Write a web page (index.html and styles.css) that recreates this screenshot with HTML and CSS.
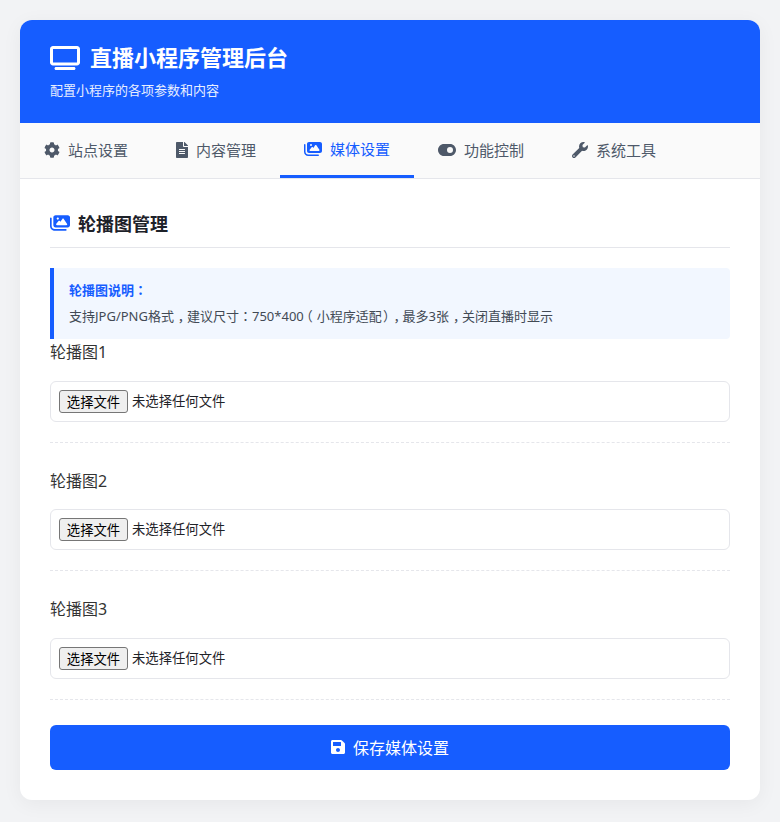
FILE: index.html
```html
<!DOCTYPE html>
<html lang="zh-CN">
<head>
<meta charset="utf-8">
<title>直播小程序管理后台</title>
<link rel="stylesheet" href="styles.css">
</head>
<body>
<main class="card">
  <header class="hero">
    <h1 class="hero-title">
      <svg class="hero-icon" viewBox="0 0 640 512"><path d="M64 64V352H576V64H64zM0 64C0 28.7 28.7 0 64 0H576c35.3 0 64 28.7 64 64V352c0 35.3-28.7 64-64 64H64c-35.3 0-64-28.7-64-64V64zM128 448H512c17.7 0 32 14.3 32 32s-14.3 32-32 32H128c-17.7 0-32-14.3-32-32s14.3-32 32-32z"/></svg>
      直播小程序管理后台
    </h1>
    <p class="hero-sub">配置小程序的各项参数和内容</p>
  </header>
  <nav class="tabs">
    <a class="tab">
      <svg class="tab-icon icon-w16" viewBox="0 0 512 512"><path d="M487.4 315.7l-42.6-24.6c4.3-23.2 4.3-47 0-70.2l42.6-24.6c4.9-2.8 7.1-8.6 5.5-14-11.1-35.6-30-67.8-54.7-94.6-3.8-4.1-10-5.1-14.8-2.3L380.8 110c-17.9-15.4-38.5-27.3-60.8-35.1V25.8c0-5.6-3.9-10.5-9.4-11.7-36.7-8.2-74.3-7.8-109.2 0-5.5 1.2-9.4 6.1-9.4 11.7V75c-22.2 7.9-42.8 19.8-60.8 35.1L88.7 85.5c-4.9-2.8-11-1.9-14.8 2.3-24.7 26.7-43.6 58.9-54.7 94.6-1.7 5.4.6 11.2 5.5 14L67.3 221c-4.3 23.2-4.3 47 0 70.2l-42.6 24.6c-4.9 2.8-7.1 8.6-5.5 14 11.1 35.6 30 67.8 54.7 94.6 3.8 4.1 10 5.1 14.8 2.3l42.6-24.6c17.9 15.4 38.5 27.3 60.8 35.1v49.2c0 5.6 3.9 10.5 9.4 11.7 36.7 8.2 74.3 7.8 109.2 0 5.5-1.2 9.4-6.1 9.4-11.7v-49.2c22.2-7.9 42.8-19.8 60.8-35.1l42.6 24.6c4.9 2.8 11 1.9 14.8-2.3 24.7-26.7 43.6-58.9 54.7-94.6 1.5-5.5-.7-11.3-5.6-14.1zM256 336c-44.1 0-80-35.9-80-80s35.9-80 80-80 80 35.9 80 80-35.9 80-80 80z"/></svg>
      站点设置
    </a>
    <a class="tab">
      <svg class="tab-icon icon-w12" viewBox="0 0 384 512"><path d="M224 136V0H24C10.7 0 0 10.7 0 24v464c0 13.3 10.7 24 24 24h336c13.3 0 24-10.7 24-24V160H248c-13.2 0-24-10.8-24-24zm64 236c0 6.6-5.4 12-12 12H108c-6.6 0-12-5.4-12-12v-8c0-6.6 5.4-12 12-12h168c6.6 0 12 5.4 12 12v8zm0-64c0 6.6-5.4 12-12 12H108c-6.6 0-12-5.4-12-12v-8c0-6.6 5.4-12 12-12h168c6.6 0 12 5.4 12 12v8zm0-72v8c0 6.6-5.4 12-12 12H108c-6.6 0-12-5.4-12-12v-8c0-6.6 5.4-12 12-12h168c6.6 0 12 5.4 12 12zm96-114.1v6.1H256V0h6.1c6.4 0 12.5 2.5 17 7l97.9 98c4.5 4.5 7 10.6 7 16.9z"/></svg>
      内容管理
    </a>
    <a class="tab tab-active">
      <svg class="tab-icon icon-w18" viewBox="0 0 576 512"><path d="M160 32c-35.3 0-64 28.7-64 64V320c0 35.3 28.7 64 64 64H512c35.3 0 64-28.7 64-64V96c0-35.3-28.7-64-64-64H160zM396 138.7l96 144c4.9 7.4 5.4 16.8 1.2 24.6S480.9 320 472 320H328 280 200c-9.2 0-17.6-5.3-21.6-13.6s-2.9-18.2 2.9-25.4l64-80c4.6-5.7 11.4-9 18.7-9s14.2 3.3 18.7 9l17.3 21.6 56-84C360.5 132 368 128 376 128s15.5 4 20 10.7zM192 128a32 32 0 1 1 64 0 32 32 0 1 1 -64 0zM48 120c0-13.3-10.7-24-24-24S0 106.7 0 120V344c0 75.1 60.9 136 136 136H456c13.3 0 24-10.7 24-24s-10.7-24-24-24H136c-48.6 0-88-39.4-88-88V120z"/></svg>
      媒体设置
    </a>
    <a class="tab">
      <svg class="tab-icon icon-w18" viewBox="0 0 576 512"><path d="M192 64C86 64 0 150 0 256S86 448 192 448H384c106 0 192-86 192-192s-86-192-192-192H192zm192 96a96 96 0 1 1 0 192 96 96 0 1 1 0-192z"/></svg>
      功能控制
    </a>
    <a class="tab">
      <svg class="tab-icon icon-w16" viewBox="0 0 512 512"><path d="M507.73 109.1c-2.24-9.03-13.54-12.09-20.12-5.51l-74.36 74.36-67.88-11.31-11.31-67.88 74.36-74.36c6.62-6.62 3.43-17.9-5.66-20.16-47.38-11.74-99.55.91-136.58 37.93-39.64 39.64-50.55 97.1-34.05 147.2L18.74 402.76c-24.99 24.99-24.99 65.51 0 90.5 24.99 24.99 65.51 24.99 90.5 0l213.21-213.21c50.12 16.71 107.47 5.68 147.37-34.22 37.07-37.07 49.7-89.32 37.91-136.73zM64 472c-13.25 0-24-10.75-24-24 0-13.26 10.75-24 24-24s24 10.74 24 24c0 13.25-10.75 24-24 24z"/></svg>
      系统工具
    </a>
  </nav>
  <section class="panel">
    <h2 class="section-title">
      <svg class="section-icon" viewBox="0 0 576 512"><path d="M160 32c-35.3 0-64 28.7-64 64V320c0 35.3 28.7 64 64 64H512c35.3 0 64-28.7 64-64V96c0-35.3-28.7-64-64-64H160zM396 138.7l96 144c4.9 7.4 5.4 16.8 1.2 24.6S480.9 320 472 320H328 280 200c-9.2 0-17.6-5.3-21.6-13.6s-2.9-18.2 2.9-25.4l64-80c4.6-5.7 11.4-9 18.7-9s14.2 3.3 18.7 9l17.3 21.6 56-84C360.5 132 368 128 376 128s15.5 4 20 10.7zM192 128a32 32 0 1 1 64 0 32 32 0 1 1 -64 0zM48 120c0-13.3-10.7-24-24-24S0 106.7 0 120V344c0 75.1 60.9 136 136 136H456c13.3 0 24-10.7 24-24s-10.7-24-24-24H136c-48.6 0-88-39.4-88-88V120z"/></svg>
      轮播图管理
    </h2>
    <div class="notice">
      <div class="notice-title">轮播图说明<span class="p-colon" lang="zh-TW">：</span></div>
      <div class="notice-text">支持JPG/PNG格式<span class="p-right">，</span>建议尺寸<span class="p-colon" lang="zh-TW">：</span>750*400<span class="p-left">（</span>小程序适配<span class="p-close">）</span><span class="p-right">，</span>最多3张<span class="p-right">，</span>关闭直播时显示</div>
    </div>
    <div class="group">
      <label class="group-label">轮播图1</label>
      <div class="file-box"><button class="file-btn" type="button">选择文件</button><span class="file-name">未选择任何文件</span></div>
    </div>
    <div class="group">
      <label class="group-label">轮播图2</label>
      <div class="file-box"><button class="file-btn" type="button">选择文件</button><span class="file-name">未选择任何文件</span></div>
    </div>
    <div class="group">
      <label class="group-label">轮播图3</label>
      <div class="file-box"><button class="file-btn" type="button">选择文件</button><span class="file-name">未选择任何文件</span></div>
    </div>
    <button class="save" type="button">
      <svg class="save-icon" viewBox="0 0 448 512"><path d="M433.941 129.941l-83.882-83.882A48 48 0 0 0 316.118 32H48C21.49 32 0 53.49 0 80v352c0 26.51 21.49 48 48 48h352c26.51 0 48-21.49 48-48V163.882a48 48 0 0 0-14.059-33.941zM224 416c-35.346 0-64-28.654-64-64 0-35.346 28.654-64 64-64s64 28.654 64 64c0 35.346-28.654 64-64 64zm96-304.52V212c0 6.627-5.373 12-12 12H76c-6.627 0-12-5.373-12-12V108c0-6.627 5.373-12 12-12h228.52c3.183 0 6.235 1.264 8.485 3.515l3.48 3.48A11.996 11.996 0 0 1 320 111.48z"/></svg>
      保存媒体设置
    </button>
  </section>
</main>
</body>
</html>
```
FILE: styles.css
```css
* { box-sizing: border-box; }
html, body { margin: 0; padding: 0; }
body {
  background: #f2f3f5;
  padding: 20px;
  font-family: "Noto Sans", "Noto Sans CJK SC", sans-serif;
  color: #1f2329;
  font-size: 14px;
  line-height: 1.6;
}
.card {
  background: #fff;
  border-radius: 12px;
  overflow: hidden;
  box-shadow: 0 4px 20px rgba(0, 0, 0, 0.05);
}
.hero {
  background: #165dff;
  color: #fff;
  padding: 20px 30px;
  height: 103px;
}
.hero-title {
  margin: 0;
  font-size: 22px;
  font-weight: 700;
  line-height: 35px;
  display: flex;
  align-items: center;
  gap: 10px;
}
.hero-icon { width: 30px; height: 24px; fill: #fff; flex: none; }
.hero-sub { margin: 5px 0 0; font-size: 13px; line-height: 21px; opacity: 0.9; }
.tabs {
  display: flex;
  background: #fafafa;
  border-bottom: 1px solid #e5e6eb;
  height: 56px;
}
.tab {
  display: flex;
  align-items: center;
  gap: 8px;
  padding: 0 24px 2px;
  color: #4e5969;
  font-size: 15px;
  height: 55px;
}
.tab-icon { height: 16px; fill: currentColor; flex: none; }
.icon-w12 { width: 12px; }
.icon-w16 { width: 16px; }
.icon-w18 { width: 18px; }
.tab-active { color: #165dff; border-bottom: 3px solid #165dff; padding-bottom: 0; }
.panel { padding: 30px; }
.section-title {
  margin: 0 0 20px;
  padding-bottom: 8px;
  border-bottom: 1px solid #e5e6eb;
  font-size: 18px;
  font-weight: 700;
  line-height: 30px;
  display: flex;
  align-items: center;
  gap: 8px;
  color: #1d2129;
}
.section-icon { width: 20px; height: 18px; fill: #165dff; flex: none; margin-bottom: 2px; }
.notice {
  background: #f2f7ff;
  border-left: 4px solid #165dff;
  padding: 12px 15px;
  font-size: 13px;
  line-height: 1.6;
  height: 71px;
  border-radius: 0 4px 4px 0;
}
.notice-title { color: #165dff; font-weight: 700; margin-bottom: 5px; }
.notice-text { color: #424a55; }
.p-colon { font-family: "Noto Sans CJK TC", sans-serif; }
.p-right { font-feature-settings: "halt"; padding-left: 0.3em; padding-right: 0.2em; }
.p-left { font-feature-settings: "halt"; padding-left: 0.2em; padding-right: 0.3em; }
.p-close { font-feature-settings: "halt"; padding-left: 0.1em; }
.group {
  margin-bottom: 25px;
  padding-bottom: 20px;
  border-bottom: 1px dashed #e5e6eb;
}
.group-label { display: block; font-size: 16px; line-height: 27.6px; margin-bottom: 14px; color: #333; }
.file-box {
  display: flex;
  align-items: center;
  height: 41px;
  padding: 8px;
  border: 1px solid #e5e6eb;
  border-radius: 6px;
}
.file-btn {
  font: 13.33px "Noto Sans CJK SC", sans-serif;
  height: 23px;
  width: 69px;
  padding: 0;
  background: #efefef;
  border: 1px solid #767676;
  border-radius: 3px;
  color: #000;
  margin-right: 4px;
}
.file-name { font-size: 13.33px; line-height: 23px; color: #1f2329; }
.save {
  display: flex;
  align-items: center;
  justify-content: center;
  gap: 8px;
  width: 100%;
  height: 45px;
  border: 0;
  border-radius: 6px;
  background: #165dff;
  color: #fff;
  font: 16px "Noto Sans", "Noto Sans CJK SC", sans-serif;
}
.save-icon { width: 14px; height: 16px; fill: #fff; flex: none; }
```
